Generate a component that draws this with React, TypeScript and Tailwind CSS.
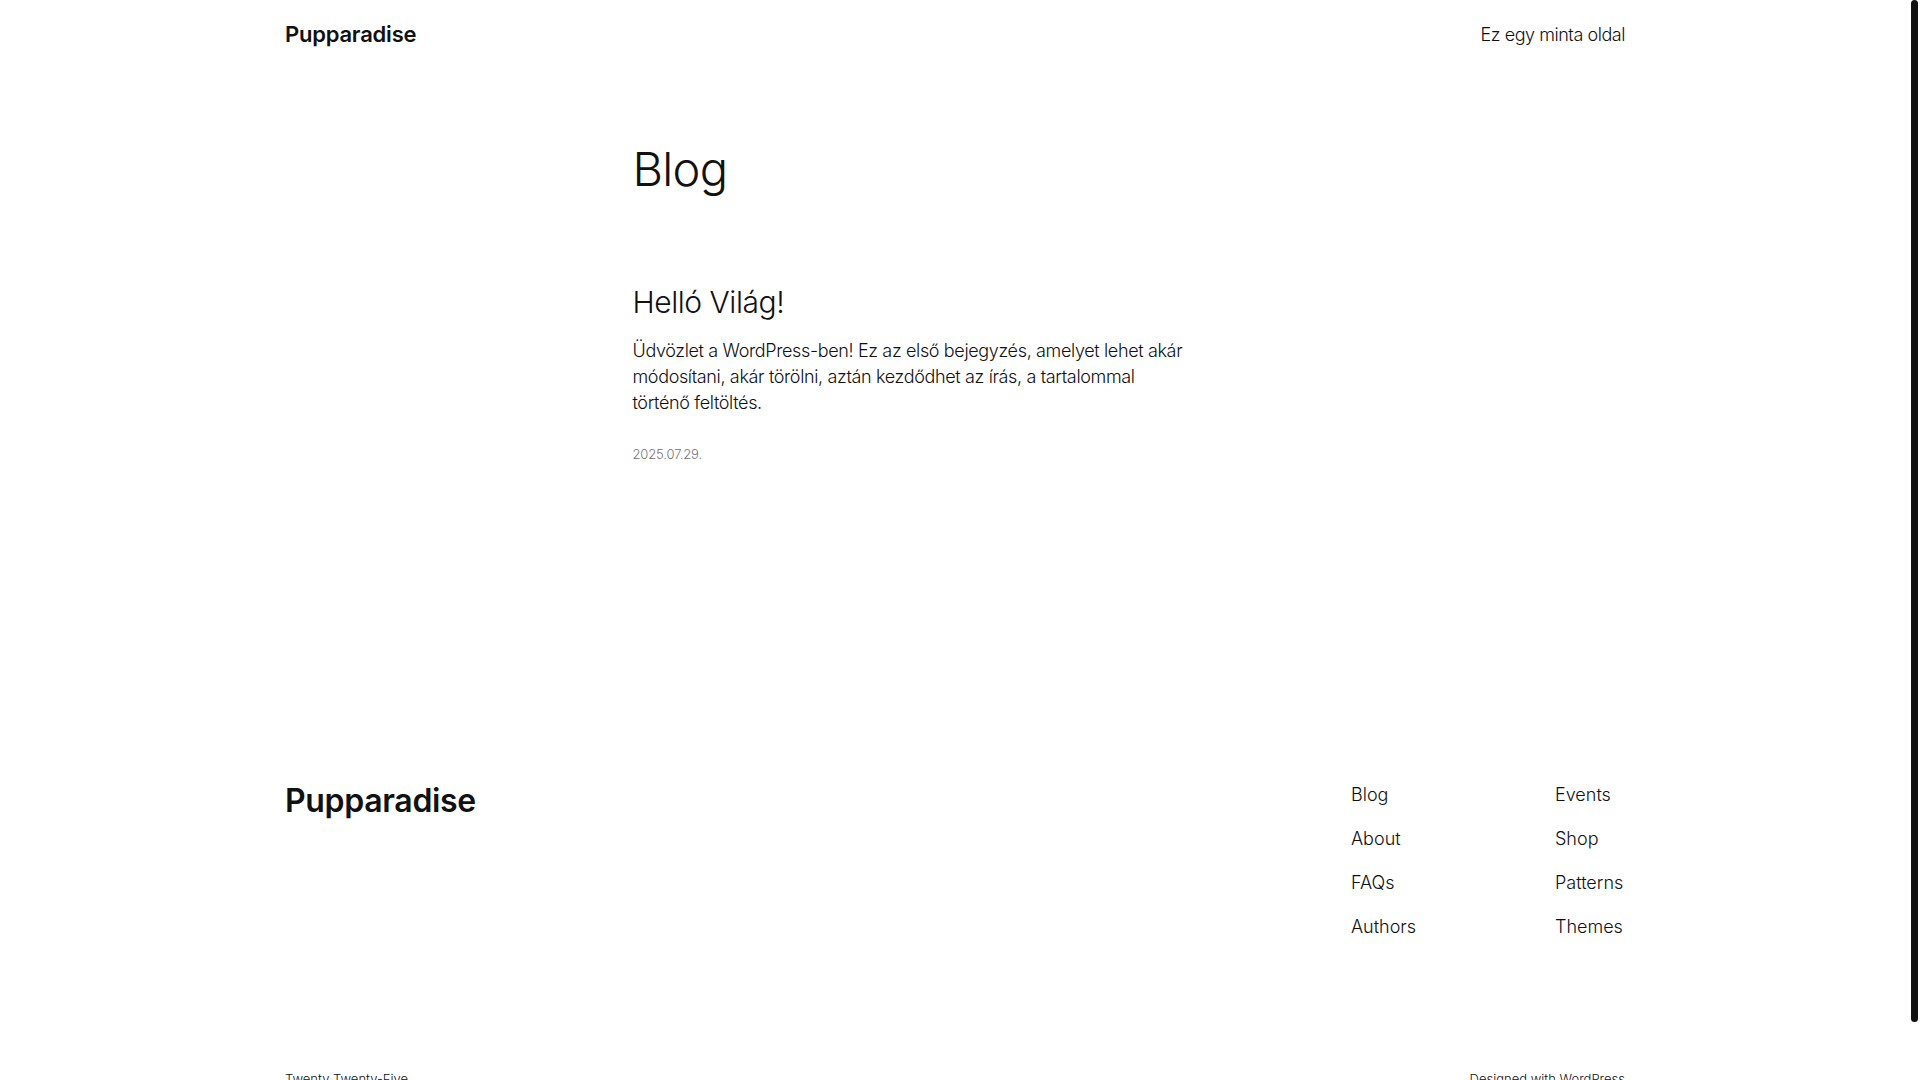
const FONT = "font-['Inter','Liberation_Sans',sans-serif]"

const NAV_LEFT = ['Blog', 'About', 'FAQs', 'Authors']
const NAV_RIGHT = ['Events', 'Shop', 'Patterns', 'Themes']

function SiteHeader() {
  return (
    <header className="px-[50px] py-[19px]">
      <div className="mx-auto flex w-full max-w-[1340px] items-center justify-between">
        <a href="#" className="text-[22px] font-semibold leading-[1.4] tracking-[-0.01em] text-[#111111]">
          Pupparadise
        </a>
        <nav>
          <a href="#" className="text-[18px] font-light leading-[1.4] tracking-[-0.025em] text-[#111111]">
            Ez egy minta oldal
          </a>
        </nav>
      </div>
    </header>
  )
}

function PostItem() {
  return (
    <article>
      <h2 className="text-[30px] font-light leading-[1.2] tracking-[-0.015em] text-[#111111]">
        <a href="#">Helló Világ!</a>
      </h2>
      <p className="mt-[18px] text-[18px] font-light leading-[1.43] tracking-[-0.02em] text-[#111111]">
        Üdvözlet a WordPress-ben! Ez az első bejegyzés, amelyet lehet akár
        <br />
        módosítani, akár törölni, aztán kezdődhet az írás, a tartalommal
        <br />
        történő feltöltés.
      </p>
      <time className="mt-[30px] block text-[13px] font-light leading-[1.5] tracking-[-0.01em] text-[#747474]">
        2025.07.29.
      </time>
    </article>
  )
}

function SiteFooter() {
  return (
    <footer className="px-[50px] pb-[56px]">
      <div className="mx-auto w-full max-w-[1340px]">
        <div className="flex items-start justify-between">
          <a href="#" className="text-[32px] font-semibold leading-[1.2] tracking-[-0.01em] text-[#111111]">
            Pupparadise
          </a>
          <div className="flex">
            <nav className="flex w-[204px] flex-col gap-[19px]">
              {NAV_LEFT.map((item) => (
                <a key={item} href="#" className="text-[18px] font-light leading-[1.4] text-[#111111]">
                  {item}
                </a>
              ))}
            </nav>
            <nav className="flex w-[70px] flex-col gap-[19px]">
              {NAV_RIGHT.map((item) => (
                <a key={item} href="#" className="whitespace-nowrap text-[18px] font-light leading-[1.4] text-[#111111]">
                  {item}
                </a>
              ))}
            </nav>
          </div>
        </div>
        <div className="mt-[130px] flex items-center justify-between text-[13px] font-light leading-[1.5] text-[#111111]">
          <p>Twenty Twenty-Five</p>
          <p>
            Designed with <a href="#">WordPress</a>
          </p>
        </div>
      </div>
    </footer>
  )
}

export default function App() {
  return (
    <div className={`${FONT} flex h-screen bg-white text-[#111111] antialiased`}>
      <div className="min-w-0 flex-1 overflow-y-auto [scrollbar-width:none]">
        <SiteHeader />
        <main className="px-[50px] pb-[317px] pt-[72px]">
          <div className="mx-auto w-full max-w-[645px]">
            <h1 className="text-[47px] font-light leading-[1.2] tracking-[-0.015em] text-[#111111]">Blog</h1>
            <div className="mt-[87px]">
              <PostItem />
            </div>
          </div>
        </main>
        <SiteFooter />
      </div>
      {/* scrollbar track */}
      <div className="w-[10px] shrink-0 pl-px">
        <div className="h-[1022px] w-[7px] rounded-full bg-[#111111]" />
      </div>
    </div>
  )
}
